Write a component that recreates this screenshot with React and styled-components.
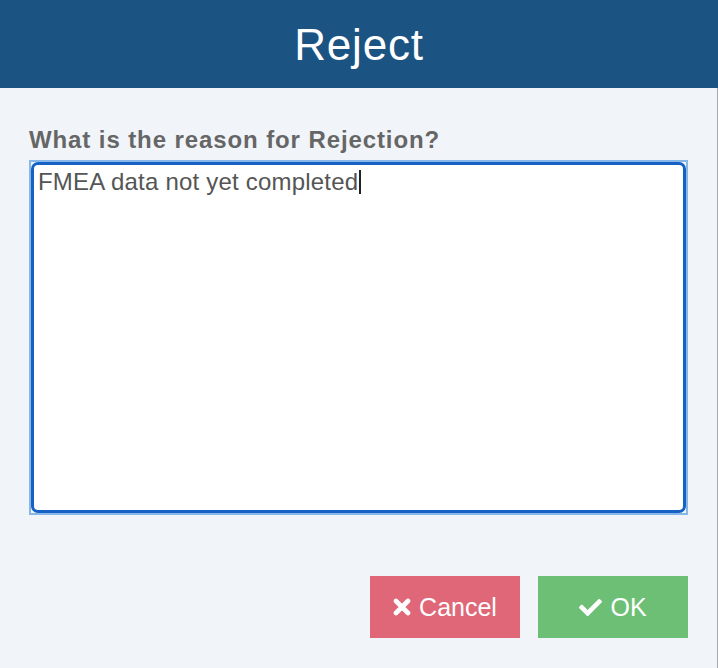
import React from 'react'
import styled, { createGlobalStyle } from 'styled-components'
import { FaCheck } from 'react-icons/fa'

const GlobalStyle = createGlobalStyle`
  html, body {
    margin: 0;
    padding: 0;
    background: #f1f5f9;
    font-family: 'Liberation Sans', Arial, sans-serif;
  }
`

const Dialog = styled.div`
  width: 718px;
  height: 668px;
  display: flex;
  flex-direction: column;
  background: #f1f5f9;
`

const Header = styled.div`
  height: 88px;
  background: #1b5482;
  color: #fff;
  display: flex;
  align-items: center;
  justify-content: center;
  font-size: 44px;
  letter-spacing: 0.8px;
  padding-top: 2px;
  box-sizing: border-box;
`

const Body = styled.div`
  flex: 1;
  padding: 39px 29px 0 29px;
  border-right: 1px solid #a4a9ae;
  display: flex;
  flex-direction: column;
`

const Label = styled.label`
  font-size: 24px;
  line-height: 26px;
  font-weight: bold;
  letter-spacing: 0.9px;
  color: #666;
  margin-bottom: 7px;
`

const FocusRing = styled.div`
  height: 355px;
  border: 2px solid #86b7e7;
  box-sizing: border-box;
  display: flex;
`

const TextBox = styled.div`
  flex: 1;
  background: #fff;
  border: 3px solid #1661c4;
  border-radius: 7px;
  padding: 2px 4px;
  font-size: 24px;
  line-height: 29px;
  letter-spacing: 0.2px;
  color: #555;
`

const Caret = styled.span`
  display: inline-block;
  width: 2px;
  height: 24px;
  background: #222;
  vertical-align: -4px;
  margin-left: 1px;
`

const Actions = styled.div`
  display: flex;
  justify-content: flex-end;
  gap: 18px;
  margin-top: 61px;
`

const Button = styled.button`
  width: 150px;
  height: 62px;
  border: none;
  border-radius: 0;
  background: ${p => (p.$variant === 'ok' ? '#6dbf75' : '#e06778')};
  color: #fff;
  font-family: 'Liberation Sans', Arial, sans-serif;
  font-size: 25px;
  display: flex;
  align-items: center;
  justify-content: center;
  gap: 8px;
  cursor: pointer;

  svg {
    font-size: 23px;
  }
`

const CrossIcon = () => (
  <svg width="18" height="18" viewBox="0 0 18 18">
    <path d="M3 3 L15 15 M15 3 L3 15" stroke="#fff" strokeWidth="4.6" strokeLinecap="round" fill="none" />
  </svg>
)

export default function App() {
  return (
    <>
      <GlobalStyle />
      <Dialog>
        <Header>Reject</Header>
        <Body>
          <Label>What is the reason for Rejection?</Label>
          <FocusRing>
            <TextBox>
              FMEA data not yet completed<Caret />
            </TextBox>
          </FocusRing>
          <Actions>
            <Button $variant="cancel"><CrossIcon /> Cancel</Button>
            <Button $variant="ok"><FaCheck /> OK</Button>
          </Actions>
        </Body>
      </Dialog>
    </>
  )
}
